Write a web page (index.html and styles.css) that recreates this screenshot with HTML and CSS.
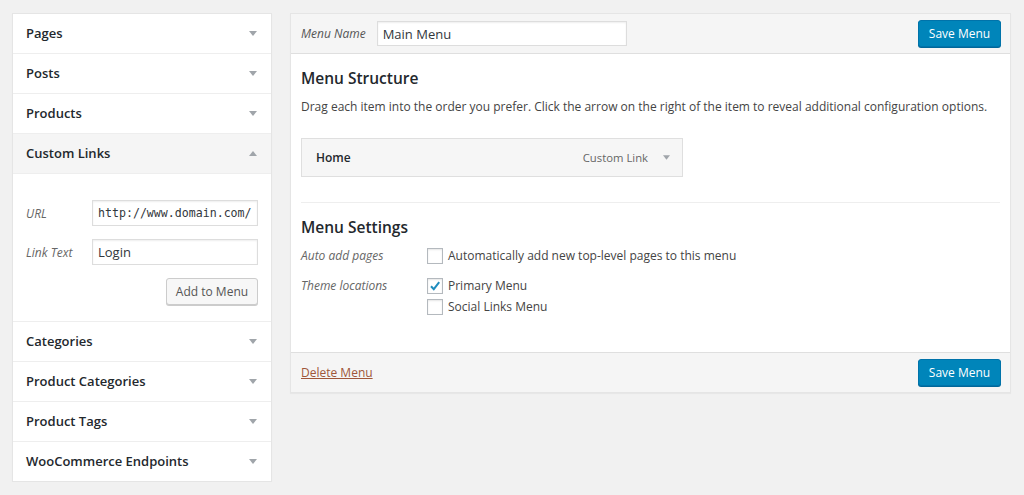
FILE: index.html
```html
<!DOCTYPE html>
<html>
<head>
<meta charset="utf-8">
<link rel="stylesheet" href="styles.css">
</head>
<body>
<div class="layout">
  <div class="sidebar">
    <div class="acc"><div class="acc-title"><span>Pages</span><svg class="arrow" width="8" height="5" viewBox="0 0 8 5"><polygon points="0,0 8,0 4,5"/></svg></div></div>
    <div class="acc"><div class="acc-title"><span>Posts</span><svg class="arrow" width="8" height="5" viewBox="0 0 8 5"><polygon points="0,0 8,0 4,5"/></svg></div></div>
    <div class="acc"><div class="acc-title"><span>Products</span><svg class="arrow" width="8" height="5" viewBox="0 0 8 5"><polygon points="0,0 8,0 4,5"/></svg></div></div>
    <div class="acc open">
      <div class="acc-title"><span>Custom Links</span><svg class="arrow" width="8" height="5" viewBox="0 0 8 5"><polygon points="0,5 8,5 4,0"/></svg></div>
      <div class="acc-body">
        <div class="field-row"><label class="field-label">URL</label><input class="field-input mono" type="text" value="http://www.domain.com/"></div>
        <div class="field-row"><label class="field-label">Link Text</label><input class="field-input" type="text" value="Login"></div>
        <div class="btn-row"><button class="btn">Add to Menu</button></div>
      </div>
    </div>
    <div class="acc"><div class="acc-title"><span>Categories</span><svg class="arrow" width="8" height="5" viewBox="0 0 8 5"><polygon points="0,0 8,0 4,5"/></svg></div></div>
    <div class="acc"><div class="acc-title"><span>Product Categories</span><svg class="arrow" width="8" height="5" viewBox="0 0 8 5"><polygon points="0,0 8,0 4,5"/></svg></div></div>
    <div class="acc"><div class="acc-title"><span>Product Tags</span><svg class="arrow" width="8" height="5" viewBox="0 0 8 5"><polygon points="0,0 8,0 4,5"/></svg></div></div>
    <div class="acc"><div class="acc-title"><span>WooCommerce Endpoints</span><svg class="arrow" width="8" height="5" viewBox="0 0 8 5"><polygon points="0,0 8,0 4,5"/></svg></div></div>
  </div>

  <div class="editor">
    <div class="editor-head">
      <div class="name-group">
        <label class="name-label">Menu Name</label>
        <input class="name-input" type="text" value="Main Menu">
      </div>
      <button class="btn-primary">Save Menu</button>
    </div>
    <div class="editor-body">
      <h3 class="section-title">Menu Structure</h3>
      <p class="desc">Drag each item into the order you prefer. Click the arrow on the right of the item to reveal additional configuration options.</p>
      <div class="menu-item">
        <span class="item-title">Home</span>
        <span class="item-controls"><span class="item-type">Custom Link</span><svg class="arrow" width="7" height="5" viewBox="0 0 8 5"><polygon points="0,0 8,0 4,5"/></svg></span>
      </div>
      <div class="settings">
        <h3 class="section-title">Menu Settings</h3>
        <div class="setting-row">
          <div class="setting-label">Auto add pages</div>
          <div class="setting-options">
            <label class="check"><span class="box"></span>Automatically add new top-level pages to this menu</label>
          </div>
        </div>
        <div class="setting-row">
          <div class="setting-label">Theme locations</div>
          <div class="setting-options">
            <label class="check"><span class="box"><svg width="14" height="14" viewBox="0 0 14 14"><path d="M3 7.2 L5.8 10.2 L11.2 3.2" fill="none" stroke="#1e8cbe" stroke-width="2"/></svg></span>Primary Menu</label>
            <label class="check"><span class="box"></span>Social Links Menu</label>
          </div>
        </div>
      </div>
    </div>
    <div class="editor-foot">
      <a class="delete-link" href="#">Delete Menu</a>
      <button class="btn-primary">Save Menu</button>
    </div>
  </div>
</div>
</body>
</html>
```

FILE: styles.css
```css
* { box-sizing: border-box; }
html, body { margin: 0; padding: 0; }
body {
  background: #f1f1f1;
  font-family: "Open Sans", "Liberation Sans", sans-serif;
  font-size: 12px;
  color: #444;
}
.layout {
  display: flex;
  align-items: flex-start;
  gap: 18px;
  padding: 13px 0 0 12px;
}
.sidebar {
  width: 260px;
  background: #fff;
  border: 1px solid #e5e5e5;
  box-shadow: 0 1px 1px rgba(0,0,0,0.04);
}
.acc { border-top: 1px solid #eee; }
.acc:first-child { border-top: none; }
.acc-title {
  height: 39px;
  display: flex;
  align-items: center;
  justify-content: space-between;
  padding: 0 14px 2px 13px;
  font-size: 13px;
  font-weight: 600;
  color: #23282d;
}
.acc-title .arrow { margin-top: 2px; }
.acc.open .acc-title { background: #f5f5f5; border-bottom: 1px solid #eee; height: 40px; }
.arrow { fill: #a0a5aa; display: block; }
.acc-body {
  padding: 26px 13px 16px 13px;
}
.field-row {
  display: grid;
  grid-template-columns: 66px 1fr;
  align-items: center;
  margin-bottom: 13px;
}
.field-label { font-style: italic; color: #666; font-size: 12px; }
.field-input {
  height: 26px;
  width: 100%;
  border: 1px solid #ddd;
  box-shadow: inset 0 1px 2px rgba(0,0,0,0.07);
  padding: 0 5px;
  font-family: "Open Sans", "Liberation Sans", sans-serif;
  font-size: 13px;
  color: #32373c;
  background: #fff;
  outline: none;
}
.field-input.mono { font-family: "DejaVu Sans Mono", "Liberation Mono", monospace; font-size: 11.6px; padding: 0 1px 0 5px; }
.btn-row { display: flex; justify-content: flex-end; }
.btn {
  height: 27px;
  width: 92px;
  padding: 0;
  background: #f7f7f7;
  border: 1px solid #ccc;
  border-radius: 3px;
  box-shadow: 0 1px 0 #ccc;
  font-family: "Open Sans", "Liberation Sans", sans-serif;
  font-size: 12px;
  color: #555;
}
.editor {
  width: 721px;
  background: #fff;
  border: 1px solid #e5e5e5;
  box-shadow: 0 1px 1px rgba(0,0,0,0.04);
}
.editor-head {
  height: 40px;
  background: #f5f5f5;
  border-bottom: 1px solid #dfdfdf;
  display: flex;
  align-items: center;
  justify-content: space-between;
  padding: 0 9px 0 10px;
}
.name-group { display: flex; align-items: center; gap: 11px; }
.name-label { font-style: italic; color: #555; font-size: 12px; }
.name-input {
  width: 250px;
  height: 25px;
  border: 1px solid #ddd;
  box-shadow: inset 0 1px 2px rgba(0,0,0,0.07);
  padding: 0 5px;
  font-family: "Open Sans", "Liberation Sans", sans-serif;
  font-size: 13px;
  color: #32373c;
  background: #fff;
  outline: none;
}
.btn-primary {
  height: 27px;
  width: 83px;
  background: #0085ba;
  border: 1px solid #0073aa;
  border-radius: 3px;
  box-shadow: 0 1px 0 #006799;
  color: #fff;
  font-family: "Open Sans", "Liberation Sans", sans-serif;
  font-size: 12px;
  padding: 0;
}
.editor-body { padding: 0 10px 35px; }
.section-title {
  margin: 12px 0 0;
  font-size: 15.5px;
  line-height: 24px;
  font-weight: 600;
  color: #23282d;
}
.desc { margin: 7px 0 0; line-height: 20px; }
.menu-item {
  margin-top: 21px;
  width: 382px;
  height: 39px;
  background: #f6f6f6;
  border: 1px solid #dfdfdf;
  display: flex;
  align-items: center;
  justify-content: space-between;
  padding: 0 12px 0 14px;
}
.item-title { font-weight: 600; color: #23282d; font-size: 12px; }
.item-controls { display: flex; align-items: center; gap: 15px; }
.item-type { font-size: 11.3px; color: #666; }
.settings {
  margin-top: 25px;
  border-top: 1px solid #eee;
}
.setting-row { display: flex; margin-top: 7px; }
.setting-row + .setting-row { margin-top: 10px; }
.setting-label { width: 126px; font-style: italic; color: #666; line-height: 20px; }
.setting-options { display: flex; flex-direction: column; gap: 1px; }
.check { display: flex; align-items: center; line-height: 20px; gap: 5px; }
.box {
  width: 16px;
  height: 16px;
  border: 1px solid #b4b9be;
  box-shadow: inset 0 1px 2px rgba(0,0,0,0.1);
  background: #fff;
  display: flex;
  align-items: center;
  justify-content: center;
}
.editor-foot {
  height: 40px;
  background: #f5f5f5;
  border-top: 1px solid #dfdfdf;
  display: flex;
  align-items: center;
  justify-content: space-between;
  padding: 0 9px 0 10px;
}
.delete-link { color: #a0563a; text-decoration: underline; font-size: 12px; }
```
